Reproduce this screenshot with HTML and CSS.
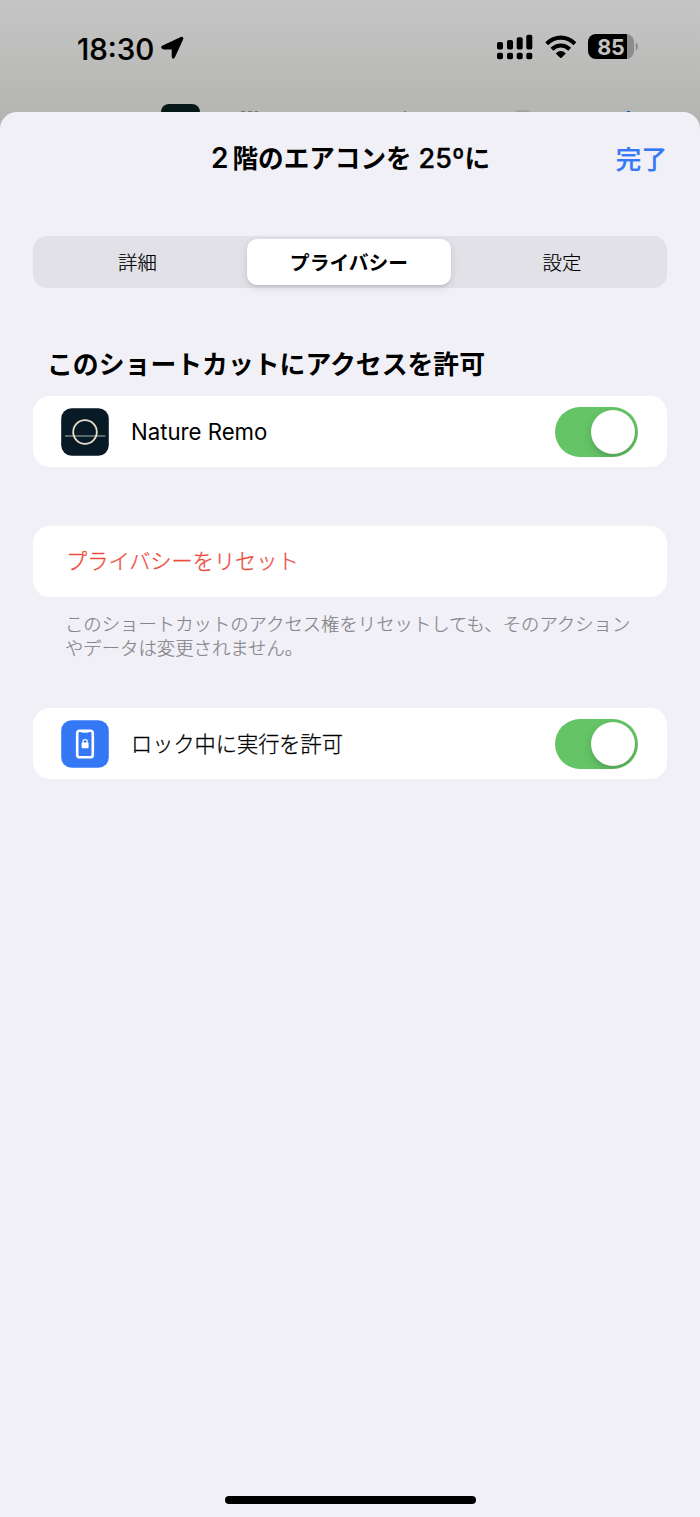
FILE: index.html
```html
<!DOCTYPE html>
<html lang="ja">
<head>
<meta charset="utf-8">
<title>ショートカット</title>
<link rel="stylesheet" href="styles.css">
</head>
<body>
<div class="screen">
  <header class="status">
    <div class="clock">
      <span class="time">18:30</span>
      <svg class="location" width="24" height="24" viewBox="0 0 24 24"><path d="M1.5 10.2 19.5 1.8Q22.6 .5 21.4 3.5L13.4 21Q12 23.5 11.3 20.5V13H3Q-.5 11.7 1.5 10.2Z" stroke="#000" stroke-width="1.2" stroke-linejoin="round"/></svg>
    </div>
    <div class="indicators">
      <svg width="37" height="26" viewBox="0 0 37 26"><rect x="0" y="8" width="6" height="7.5" rx="1.8"/><rect x="10" y="6" width="6" height="9.5" rx="1.8"/><rect x="19.7" y="3.2" width="6" height="12.3" rx="1.8"/><rect x="29.3" y=".8" width="6" height="14.7" rx="1.8"/><rect x="0" y="18.7" width="6" height="6.5" rx="1.8"/><rect x="10" y="18.7" width="6" height="6.5" rx="1.8"/><rect x="19.7" y="18.7" width="6" height="6.5" rx="1.8"/><rect x="29.3" y="18.7" width="6" height="6.5" rx="1.8"/></svg>
      <svg class="wifi" width="32" height="24" viewBox="0 0 32 24"><g fill="none" stroke="#000" stroke-width="4.2"><path d="M1.7 8.7Q8 2.7 15.8 2.7T29.9 8.7"/><path d="M6.9 14.2Q11 10.5 15.8 10.5T24.7 14.2"/></g><path d="M10.7 18.4Q15.8 13.8 20.9 18.4L16.5 22.7Q15.8 23.4 15.1 22.7Z"/></svg>
      <div class="battery"><div class="battery-body">85</div><svg width="4" height="9" viewBox="0 0 4 9"><path d="M.6.4Q3 1.2 3 4.5T.6 8.6Z" fill="#8b8c8b"/></svg></div>
    </div>
    <span class="peek peek-icon"></span>
    <span class="peek peek-text"></span>
    <span class="peek peek-mark"></span>
    <span class="peek peek-close"></span>
    <span class="peek peek-link"></span>
  </header>
  <main class="sheet">
    <div class="titlebar">
      <h1><span class="two">2</span>階のエアコンを<span class="degrees">25º</span>に</h1>
      <a class="done">完了</a>
    </div>
    <nav class="tabs">
      <span class="tab first">詳細</span>
      <span class="tab selected">プライバシー</span>
      <span class="tab last">設定</span>
    </nav>
    <h2>このショートカットにアクセスを許可</h2>
    <section class="card">
      <svg class="app" width="48" height="48" viewBox="0 0 48 48"><rect x=".2" y=".2" width="47.6" height="47.6" rx="10.5" fill="#071a26"/><path d="M4 28H44.5" stroke="#77817f" stroke-width="1.6"/><circle cx="24" cy="24" r="11.8" fill="none" stroke="#eadfc9" stroke-width="1.8"/></svg>
      <span class="label latin">Nature Remo</span>
      <span class="switch"><span class="knob"></span></span>
    </section>
    <section class="card reset">プライバシーをリセット</section>
    <p class="note">このショートカットのアクセス権をリセットしても、そのアクション<br>やデータは変更されません。</p>
    <section class="card">
      <svg class="app" width="48" height="48" viewBox="0 0 48 48"><rect x=".2" y=".2" width="47.6" height="47.6" rx="10.5" fill="#3478f6"/><rect x="16.2" y="10.7" width="15.6" height="26.6" rx="2.6" fill="none" stroke="#fff" stroke-width="2.6"/><path d="M20.5 12.2H27.5" stroke="#fff" stroke-width="1"/><rect x="20.6" y="22.6" width="7" height="5.6" rx="1" fill="#fff"/><path d="M22 23V21.3Q22 19.7 24.1 19.7T26.2 21.3V23" fill="none" stroke="#fff" stroke-width="1.2"/></svg>
      <span class="label japanese">ロック中に実行を許可</span>
      <span class="switch"><span class="knob"></span></span>
    </section>
    <div class="home"></div>
  </main>
</div>
</body>
</html>
```
FILE: styles.css
```css
* { box-sizing: border-box; }
body { margin: 0; color: #000; font-family: Inter, "Noto Sans CJK JP", sans-serif; }
h1, h2, p { margin: 0; }
svg { display: block; flex: none; }
.screen { height: 1517px; display: flex; flex-direction: column; overflow: hidden; background: linear-gradient(#c5c5c5, #b5b6b3 112px, #b5b6b3); }
.status { position: relative; flex: none; height: 112px; padding: 0 61px 0 77px; display: flex; justify-content: space-between; }
.clock { display: flex; gap: 7px; padding-top: 30px; }
.time { width: 77px; padding-top: 1px; font-size: 29.5px; line-height: 36px; font-weight: 500; -webkit-text-stroke: .2px #000; letter-spacing: 0; }
.location { margin-top: 6px; }
.indicators { display: flex; padding-top: 34px; }
.wifi { margin: 1px 11px 0 11px; }
.battery { display: flex; align-items: center; height: 25px; gap: 1px; }
.battery-body { width: 46px; height: 25px; border-radius: 8px; text-align: center; font-size: 21.5px; line-height: 26px; font-weight: 700; color: #c3c3c2; background: linear-gradient(90deg, #000 39px, #8b8c8b 39px); }
.peek { position: absolute; bottom: 0; }
.peek-icon { left: 161px; width: 39px; height: 8px; border-radius: 8px 8px 0 0; background: #061818; }
.peek-text { left: 241px; width: 17px; height: 1px; background: repeating-linear-gradient(90deg, #777 0 4px, #b5b6b3 4px 7px); }
.peek-mark { left: 404px; width: 2px; height: 1px; background: #777; }
.peek-close { left: 515px; width: 15px; height: 2px; border-radius: 7px 7px 0 0 / 2px 2px 0 0; background: #a0a19e; }
.peek-link { left: 627px; width: 3px; height: 1px; background: #1958b4; }
.sheet { flex: 1; display: flex; flex-direction: column; padding: 0 33px; border-radius: 17px 17px 0 0; background: #f1f0f6; }
.titlebar { height: 124px; display: grid; grid-template-columns: 1fr auto 1fr; align-items: start; padding-top: 29px; }
h1 { grid-column: 2; font-size: 25.6px; line-height: 36px; font-weight: 600; white-space: nowrap; }
.two { margin: 0 4px 0 1px; font-size: 28px; line-height: 1; }
.degrees { margin-left: 7px; font-size: 27px; line-height: 1; font-weight: 500; -webkit-text-stroke: .3px #000; }
.done { justify-self: end; margin-top: 1px; font-size: 25.6px; line-height: 36px; font-weight: 500; color: #3478f6; -webkit-text-stroke: .2px #3478f6; }
.tabs { height: 52px; flex: none; display: grid; grid-template-columns: 208px 1fr 208px; gap: 3px; padding: 3px; border-radius: 14px; background: #e2e1e7; }
.tab { display: flex; align-items: center; justify-content: center; padding-bottom: 2px; font-size: 19.4px; font-weight: 300; -webkit-text-stroke: .2px #000; }
.first { padding-right: 5px; }
.last { padding-left: 4px; }
.selected { margin: 0 2px 0 0; border-radius: 10px; background: #fff; font-weight: 600; font-size: 19.8px; -webkit-text-stroke: 0; box-shadow: 0 3px 8px #0000001c, 0 2px 2px #00000010; }
h2 { margin: 58px 0 0 14px; height: 50px; font-size: 25.85px; line-height: 38px; font-weight: 600; white-space: nowrap; }
.card { height: 71px; flex: none; display: flex; align-items: center; padding: 0 29px 0 28px; border-radius: 17px; background: #fff; font-size: 21.2px; }
.label { margin-left: 22px; flex: 1; }
.latin { font-size: 22.2px; }
.japanese { padding-bottom: 2px; font-weight: 300; -webkit-text-stroke: .3px #000; }
.switch { width: 83px; height: 50px; padding: 3px; display: flex; justify-content: flex-end; border-radius: 25px; background: #65c466; overflow: hidden; }
.knob { width: 44px; height: 44px; border-radius: 50%; background: #fff; box-shadow: 0 4px 10px #00000028, 0 2px 2px #0000000c; }
.reset { margin-top: 59px; padding-left: 33px; padding-bottom: 4px; font-weight: 300; color: #eb4d3d; -webkit-text-stroke: .3px #eb4d3d; }
.note { margin: 16px 0 48px 32px; font-size: 18.37px; line-height: 23.5px; font-weight: 300; color: #85848a; white-space: nowrap; -webkit-text-stroke: .2px #85848a; }
.home { width: 251px; height: 8px; margin: auto auto 13px; border-radius: 4px; background: #000; }
```
